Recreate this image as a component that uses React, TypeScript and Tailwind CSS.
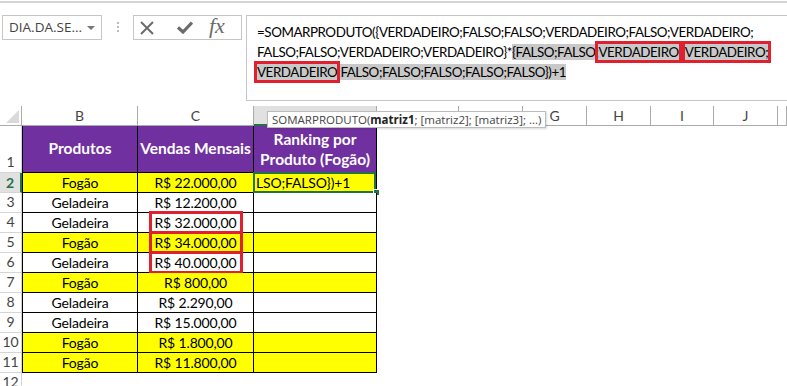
import { Fragment } from "react";

interface Row {
  produto: string;
  valor: string;
  fogao: boolean;
  marcado?: boolean;
}

const rows: Row[] = [
  { produto: "Fogão", valor: "R$ 22.000,00", fogao: true },
  { produto: "Geladeira", valor: "R$ 12.200,00", fogao: false },
  { produto: "Geladeira", valor: "R$ 32.000,00", fogao: false, marcado: true },
  { produto: "Fogão", valor: "R$ 34.000,00", fogao: true, marcado: true },
  { produto: "Geladeira", valor: "R$ 40.000,00", fogao: false, marcado: true },
  { produto: "Fogão", valor: "R$ 800,00", fogao: true },
  { produto: "Geladeira", valor: "R$ 2.290,00", fogao: false },
  { produto: "Geladeira", valor: "R$ 15.000,00", fogao: false },
  { produto: "Fogão", valor: "R$ 1.800,00", fogao: true },
  { produto: "Fogão", valor: "R$ 11.800,00", fogao: true },
];

// E and F sit under the tooltip, so their letters are not seen
const cols = ["", "", "G", "H", "I", "J", ""];

const FormulaBar = () => {
  return (
    <div className="flex h-[105px] pt-[12px] border-t-2 border-[#d4d4d4]">
      {/* name box */}
      <div className="shrink-0 ml-[2px] w-[100px] h-[25px] border border-[#c6c6c6] flex items-center justify-between pl-[6px] pr-[6px] font-['Open_Sans',sans-serif] text-[13.5px] text-[#444]">
        <span>DIA.DA.SE...</span>
        <span className="w-0 h-0 border-l-[4px] border-r-[4px] border-t-[4px] border-l-transparent border-r-transparent border-t-[#777]" />
      </div>
      <div className="shrink-0 w-[31px] flex flex-col items-center pt-[7px] gap-[2px]">
        <span className="w-[2px] h-[2px] bg-[#bbb]" />
        <span className="w-[2px] h-[2px] bg-[#bbb]" />
        <span className="w-[2px] h-[2px] bg-[#bbb]" />
      </div>
      {/* buttons */}
      <div className="shrink-0 w-[109px] h-[25px] border border-[#c6c6c6] flex items-center pl-[6px]">
        <svg width="14" height="14" viewBox="0 0 14 14">
          <path d="M1 1 L13 13 M13 1 L1 13" stroke="#6b6b6b" strokeWidth="2" />
        </svg>
        <svg width="16" height="13" viewBox="0 0 16 13" className="ml-[23px]">
          <path d="M1 6.5 L6 11 L15 1.5" stroke="#6b6b6b" strokeWidth="3.2" fill="none" />
        </svg>
        <span className="ml-[16px] font-['Liberation_Serif',serif] italic text-[22px] leading-none text-[#6b6b6b] -mt-[3px]">fx</span>
      </div>
      {/* formula */}
      <div className="min-w-0 ml-[4px] flex-1 h-[86px] border border-r-0 border-[#c6c6c6] pl-[10px] pt-[6px] font-['Lato',sans-serif] text-[13.4px] tracking-[-0.45px] leading-[20px] text-black whitespace-nowrap overflow-hidden">
        <div>=SOMARPRODUTO({"{"}VERDADEIRO;FALSO;FALSO;VERDADEIRO;FALSO;VERDADEIRO;</div>
        <div>
          FALSO;FALSO;VERDADEIRO;VERDADEIRO{"}"}*
          <span className="bg-[#c8c8c8]">
            {"{"}FALSO;FALSO;
            <span className="outline-[3px] outline outline-[#e0202e]">VERDADEIRO</span>;
            <span className="outline-[3px] outline outline-[#e0202e] ml-[3px]">VERDADEIRO;</span>
          </span>
        </div>
        <div>
          <span className="bg-[#c8c8c8]">
            <span className="outline-[3px] outline outline-[#e0202e]">VERDADEIRO</span>;FALSO;FALSO;FALSO;FALSO;FALSO{"}"})+1
          </span>
        </div>
      </div>
    </div>
  );
};

const Grid = () => {
  const rowNum = "border-r border-b border-[#d4d4d4] text-[#444] flex items-end justify-center text-[14px]";
  const cell = "border-r border-b border-black flex items-center justify-center text-[14px] tracking-[-0.15px]";
  return (
    <div className="relative grid grid-cols-[22px_116px_116px_123px_82px_64px_64px_64px_63px_64px_1fr] grid-rows-[20px_47px_repeat(11,20px)] font-['Lato',sans-serif]">
      {/* header row */}
      <div className="border-r border-b border-[#ababab] flex items-end justify-end pr-[2px] pb-[2px]">
        <svg width="13" height="13" viewBox="0 0 13 13">
          <path d="M13 0 L13 13 L0 13 Z" fill="#dadada" />
        </svg>
      </div>
      <div className="border-r border-b border-[#ababab] text-[#444] text-[14px] flex items-center justify-center">B</div>
      <div className="border-r border-b border-[#ababab] text-[#444] text-[14px] flex items-center justify-center">C</div>
      <div className="bg-[#e1e1e1] border-r border-[#ababab] border-b-2 border-b-[#217346]" />
      {cols.map((c, i) => (
        <div key={i} className="border-r border-b border-[#ababab] text-[#444] text-[14px] flex items-center justify-center">{c}</div>
      ))}

      {/* row 1 */}
      <div className={rowNum}>1</div>
      <div className={`${cell} border-l bg-[#7030a0] text-white font-bold text-[15.5px] tracking-normal`}>Produtos</div>
      <div className={`${cell} bg-[#7030a0] text-white font-bold text-[15.5px] tracking-normal`}>Vendas Mensais</div>
      <div className={`${cell} bg-[#7030a0] text-white font-bold text-[15.5px] tracking-normal text-center leading-[20px]`}>
        Ranking por<br />Produto (Fogão)
      </div>
      <div className="col-span-7" />

      {rows.map((r, i) => {
        const bg = r.fogao ? "bg-[#ffff00]" : "bg-white";
        const active = i === 0;
        return (
          <Fragment key={i}>
            <div
              className={
                active
                  ? "bg-[#e1e1e1] border-r-2 border-r-[#217346] border-b border-[#d4d4d4] text-[#217346] font-bold flex items-center justify-center text-[14px]"
                  : `${rowNum} items-center`
              }
            >
              {i + 2}
            </div>
            <div className={`${cell} border-l ${bg}`}>{r.produto}</div>
            <div className={`${cell} ${bg}`}>
              {r.marcado ? (
                <span className="inline-block px-[3px] outline-[3px] outline outline-[#e0202e] leading-[17px]">{r.valor}</span>
              ) : (
                r.valor
              )}
            </div>
            <div className={`${cell} ${bg} relative justify-start pl-[2px]`}>
              {active && (
                <>
                  <span>LSO;FALSO{"}"})+1</span>
                  <span className="absolute -left-[1px] -top-[1px] right-0 -bottom-[1px] border-2 border-[#217346]" />
                  <span className="absolute -right-[4px] -bottom-[4px] w-[7px] h-[7px] bg-[#217346] border border-white" />
                </>
              )}
            </div>
            <div className="col-span-7" />
          </Fragment>
        );
      })}

      <div className={`${rowNum} items-center`}>12</div>
      <div className="col-span-10" />

      {/* tooltip */}
      <div className="absolute left-[267px] top-[5px] w-[279px] h-[17px] bg-white border border-[#bcbcbc] shadow-[1px_1px_2px_rgba(0,0,0,0.15)] flex items-center pl-[4px] font-['Open_Sans',sans-serif] text-[11.5px] text-[#444] whitespace-nowrap">
        SOMARPRODUTO(<b className="text-[#222]">matriz1</b>; [matriz2]; [matriz3]; ...)
      </div>
    </div>
  );
};

export default function App() {
  return (
    <div className="w-[787px] h-[386px] overflow-hidden bg-white pt-[1px]">
      <FormulaBar />
      <Grid />
    </div>
  );
}
